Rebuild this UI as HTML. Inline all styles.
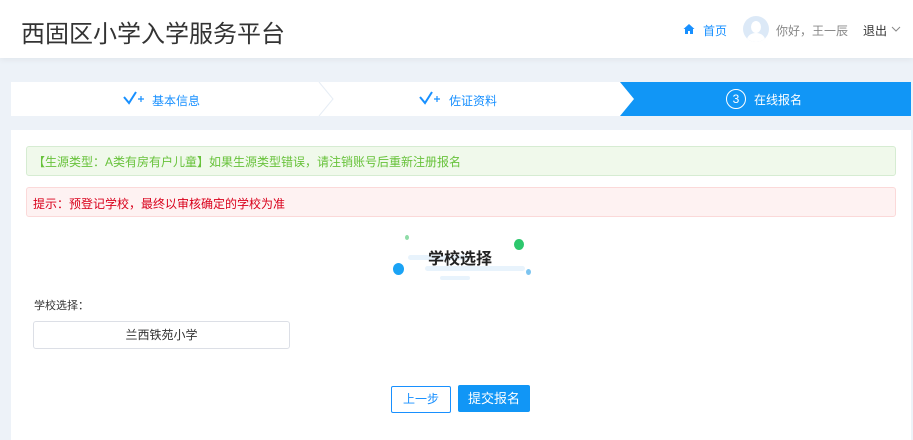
<!DOCTYPE html><html><head><meta charset="utf-8"><style>
body{margin:0;width:913px;height:437px;background:#edf2f8;font-family:"Liberation Sans","Noto Sans CJK SC",sans-serif;position:relative;overflow:hidden}
.a{position:absolute}
</style></head><body>
<div class="a" style="left:0;top:0;width:913px;height:58px;background:#fff;box-shadow:0 2px 6px rgba(0,0,0,.05)"></div>
<div class="a" style="left:21px;top:14px;font-size:24px;color:#333">西固区小学入学服务平台</div>
<svg class="a" style="left:683px;top:23px" width="12" height="12" viewBox="0 0 12 12"><path d="M6 1 L11.5 6 H10 V11 H7 V8 H5 V11 H2 V6 H0.5Z" fill="#1890ff"/></svg>
<div class="a" style="left:703px;top:22px;font-size:12px;color:#1890ff">首页</div>
<div class="a" style="left:743px;top:16px;width:26px;height:26px;border-radius:50%;background:#dce9f7;overflow:hidden"><div class="a" style="left:8px;top:5px;width:10px;height:12px;border-radius:50%;background:#fff"></div><div class="a" style="left:4px;top:17px;width:18px;height:14px;border-radius:50%;background:#fff"></div></div>
<div class="a" style="left:776px;top:22px;font-size:12px;color:#888">你好，王一辰</div>
<div class="a" style="left:863px;top:22px;font-size:12px;color:#333">退出</div>
<svg class="a" style="left:891px;top:26px" width="10" height="7"><path d="M1 1 L5 5 L9 1" stroke="#888" fill="none"/></svg>

<div class="a" style="left:11px;top:82px;width:900px;height:34px;background:#fff"></div>
<svg class="a" style="left:11px;top:82px" width="900" height="34"><path d="M308 0 L322 17 L308 34" stroke="#e6edf5" fill="none"/><path d="M609 0 L900 0 L900 34 L609 34 L623 17Z" fill="#1196f6"/></svg>
<svg class="a" style="left:123px;top:91px" width="22" height="14"><path d="M1 6 L6 12 L13 1" stroke="#1890ff" stroke-width="2" fill="none"/><path d="M15 8 H21 M18 5 V11" stroke="#1890ff" stroke-width="1.2"/></svg>
<div class="a" style="left:152px;top:92px;font-size:12px;color:#1890ff">基本信息</div>
<svg class="a" style="left:419px;top:91px" width="22" height="14"><path d="M1 6 L6 12 L13 1" stroke="#1890ff" stroke-width="2" fill="none"/><path d="M15 8 H21 M18 5 V11" stroke="#1890ff" stroke-width="1.2"/></svg>
<div class="a" style="left:449px;top:92px;font-size:12px;color:#1890ff">佐证资料</div>
<div class="a" style="left:726px;top:89px;width:18px;height:18px;border:1px solid #fff;border-radius:50%;color:#fff;font-size:12px;text-align:center;line-height:18px">3</div>
<div class="a" style="left:754px;top:91px;font-size:12px;color:#fff">在线报名</div>

<div class="a" style="left:11px;top:130px;width:900px;height:310px;background:#fff"></div>
<div class="a" style="left:26px;top:146px;width:868px;height:28px;background:#f0f9eb;border:1px solid #d6ecd2;border-radius:3px"></div>
<div class="a" style="left:33px;top:153px;font-size:12px;color:#67c23a">【生源类型：A类有房有户儿童】如果生源类型错误，请注销账号后重新注册报名</div>
<div class="a" style="left:26px;top:187px;width:868px;height:28px;background:#fef2f2;border:1px solid #fbd9d9;border-radius:3px"></div>
<div class="a" style="left:33px;top:195px;font-size:12px;color:#d9001b">提示：预登记学校，最终以审核确定的学校为准</div>

<div class="a" style="left:408px;top:255px;width:60px;height:5px;background:#e8f3fc;border-radius:3px"></div>
<div class="a" style="left:425px;top:266px;width:100px;height:5px;background:#e8f3fc;border-radius:3px"></div>
<div class="a" style="left:440px;top:276px;width:30px;height:4px;background:#e8f3fc;border-radius:3px"></div>
<div class="a" style="left:393px;top:263px;width:11px;height:12px;border-radius:50%;background:#1aa3f5"></div>
<div class="a" style="left:514px;top:239px;width:10px;height:11px;border-radius:50%;background:#2dc76d"></div>
<div class="a" style="left:405px;top:235px;width:4px;height:5px;border-radius:50%;background:#8fdca8"></div>
<div class="a" style="left:526px;top:269px;width:5px;height:6px;border-radius:50%;background:#7cc4f0"></div>
<div class="a" style="left:428px;top:245px;font-size:16px;font-weight:bold;color:#222">学校选择</div>

<div class="a" style="left:34px;top:297px;font-size:11px;color:#333">学校选择：</div>
<div class="a" style="left:33px;top:321px;width:255px;height:26px;border:1px solid #dcdfe6;border-radius:3px;font-size:12px;color:#333;text-align:center;line-height:26px">兰西铁苑小学</div>

<div class="a" style="left:391px;top:386px;width:58px;height:25px;border:1px solid #1890ff;border-radius:2px;font-size:12px;color:#1890ff;text-align:center;line-height:25px">上一步</div>
<div class="a" style="left:458px;top:385px;width:72px;height:27px;background:#1196f6;border-radius:2px;font-size:13px;color:#fff;text-align:center;line-height:27px">提交报名</div>
</body></html>
